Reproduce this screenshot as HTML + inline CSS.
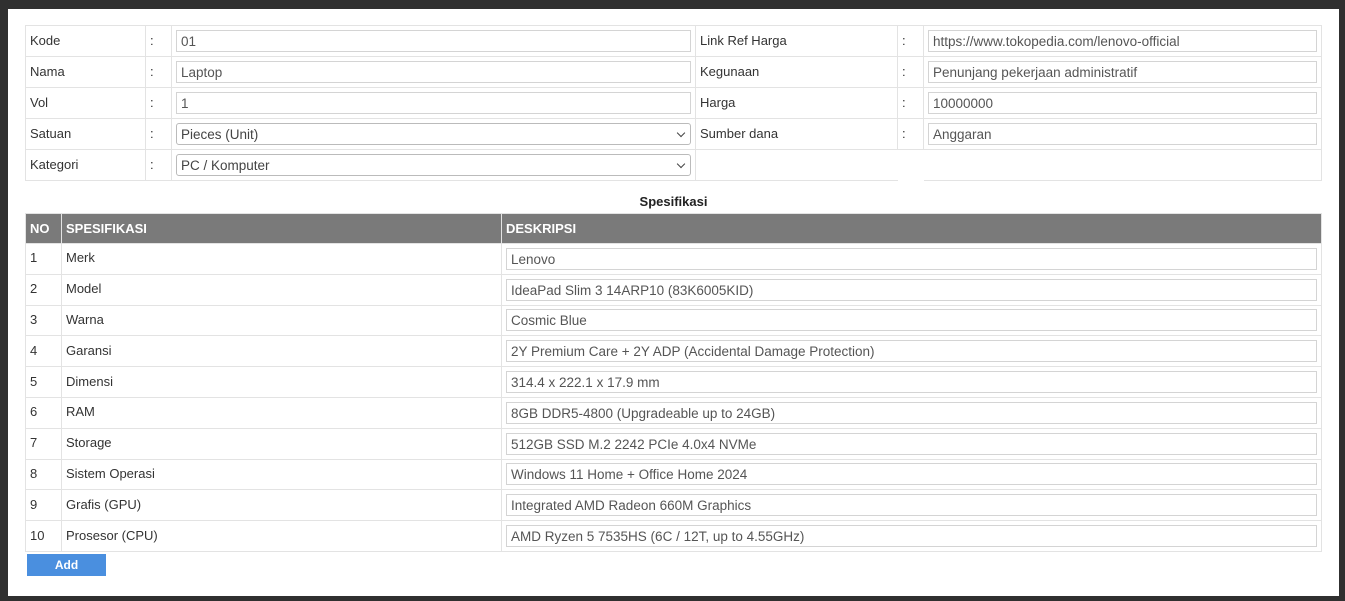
<!DOCTYPE html>
<html><head><meta charset="utf-8"><style>
*{box-sizing:border-box;margin:0;padding:0}
body{width:1345px;height:601px;background:#303030;position:relative;overflow:hidden;font-family:"Liberation Sans",Arial,sans-serif;font-size:13px;color:#333}
.modal{position:absolute;left:8px;top:9px;width:1331px;height:587px;background:#fff}
table{border-collapse:collapse;position:absolute}
td,th{border:1px solid #e3e3e3;padding:0 4px;text-align:left;vertical-align:middle}
td{padding-bottom:2px}
.inp{border:1px solid #d4d4d4;height:22px;line-height:22px;padding:0 4px;font-size:13.5px;color:#555;background:#fff;width:100%;position:relative;margin-top:2px}
.sel{border-radius:3px;border-color:#bbb;padding-left:4px;color:#444}
.sel::after{content:"";position:absolute;right:6px;top:6px;width:5px;height:5px;border-right:1.5px solid #444;border-bottom:1.5px solid #444;transform:rotate(45deg)}
#t1{left:17px;top:16px;width:1297px}
#t1 td{height:31px}
th{background:#7a7a7a;color:#fff;font-weight:bold;height:30px;border-color:#e3e3e3}
#t2{left:17px;top:204px;width:1297px}
#t2 td{height:30.8px}
.title{position:absolute;left:0;width:1331px;top:185px;text-align:center;font-weight:bold;font-size:13px;color:#222}
.btn{position:absolute;left:19px;top:545px;width:79px;height:22px;background:#4a8fdf;color:#fff;font-weight:bold;font-size:12px;text-align:center;line-height:22px}
</style></head><body>
<div class="modal">
<table id="t1">
<colgroup><col style="width:120px"><col style="width:26px"><col style="width:524px"><col style="width:202px"><col style="width:26px"><col></colgroup>
<tr><td>Kode</td><td>:</td><td><div class="inp">01</div></td><td>Link Ref Harga</td><td>:</td><td><div class="inp">https://www.tokopedia.com/lenovo-official</div></td></tr>
<tr><td>Nama</td><td>:</td><td><div class="inp">Laptop</div></td><td>Kegunaan</td><td>:</td><td><div class="inp">Penunjang pekerjaan administratif</div></td></tr>
<tr><td>Vol</td><td>:</td><td><div class="inp">1</div></td><td>Harga</td><td>:</td><td><div class="inp">10000000</div></td></tr>
<tr><td>Satuan</td><td>:</td><td><div class="inp sel">Pieces (Unit)</div></td><td>Sumber dana</td><td>:</td><td><div class="inp">Anggaran</div></td></tr>
<tr><td>Kategori</td><td>:</td><td><div class="inp sel">PC / Komputer</div></td><td style="border-right:none"></td><td style="border:none"></td><td style="border-left:none"></td></tr>
</table>
<div class="title">Spesifikasi</div>
<table id="t2">
<colgroup><col style="width:36px"><col style="width:440px"><col></colgroup>
<tr><th>NO</th><th>SPESIFIKASI</th><th>DESKRIPSI</th></tr>
<tr><td>1</td><td>Merk</td><td><div class="inp">Lenovo</div></td></tr>
<tr><td>2</td><td>Model</td><td><div class="inp">IdeaPad Slim 3 14ARP10 (83K6005KID)</div></td></tr>
<tr><td>3</td><td>Warna</td><td><div class="inp">Cosmic Blue</div></td></tr>
<tr><td>4</td><td>Garansi</td><td><div class="inp">2Y Premium Care + 2Y ADP (Accidental Damage Protection)</div></td></tr>
<tr><td>5</td><td>Dimensi</td><td><div class="inp">314.4 x 222.1 x 17.9 mm</div></td></tr>
<tr><td>6</td><td>RAM</td><td><div class="inp">8GB DDR5-4800 (Upgradeable up to 24GB)</div></td></tr>
<tr><td>7</td><td>Storage</td><td><div class="inp">512GB SSD M.2 2242 PCIe 4.0x4 NVMe</div></td></tr>
<tr><td>8</td><td>Sistem Operasi</td><td><div class="inp">Windows 11 Home + Office Home 2024</div></td></tr>
<tr><td>9</td><td>Grafis (GPU)</td><td><div class="inp">Integrated AMD Radeon 660M Graphics</div></td></tr>
<tr><td>10</td><td>Prosesor (CPU)</td><td><div class="inp">AMD Ryzen 5 7535HS (6C / 12T, up to 4.55GHz)</div></td></tr>
</table>
<div class="btn">Add</div>
</div>
</body></html>
